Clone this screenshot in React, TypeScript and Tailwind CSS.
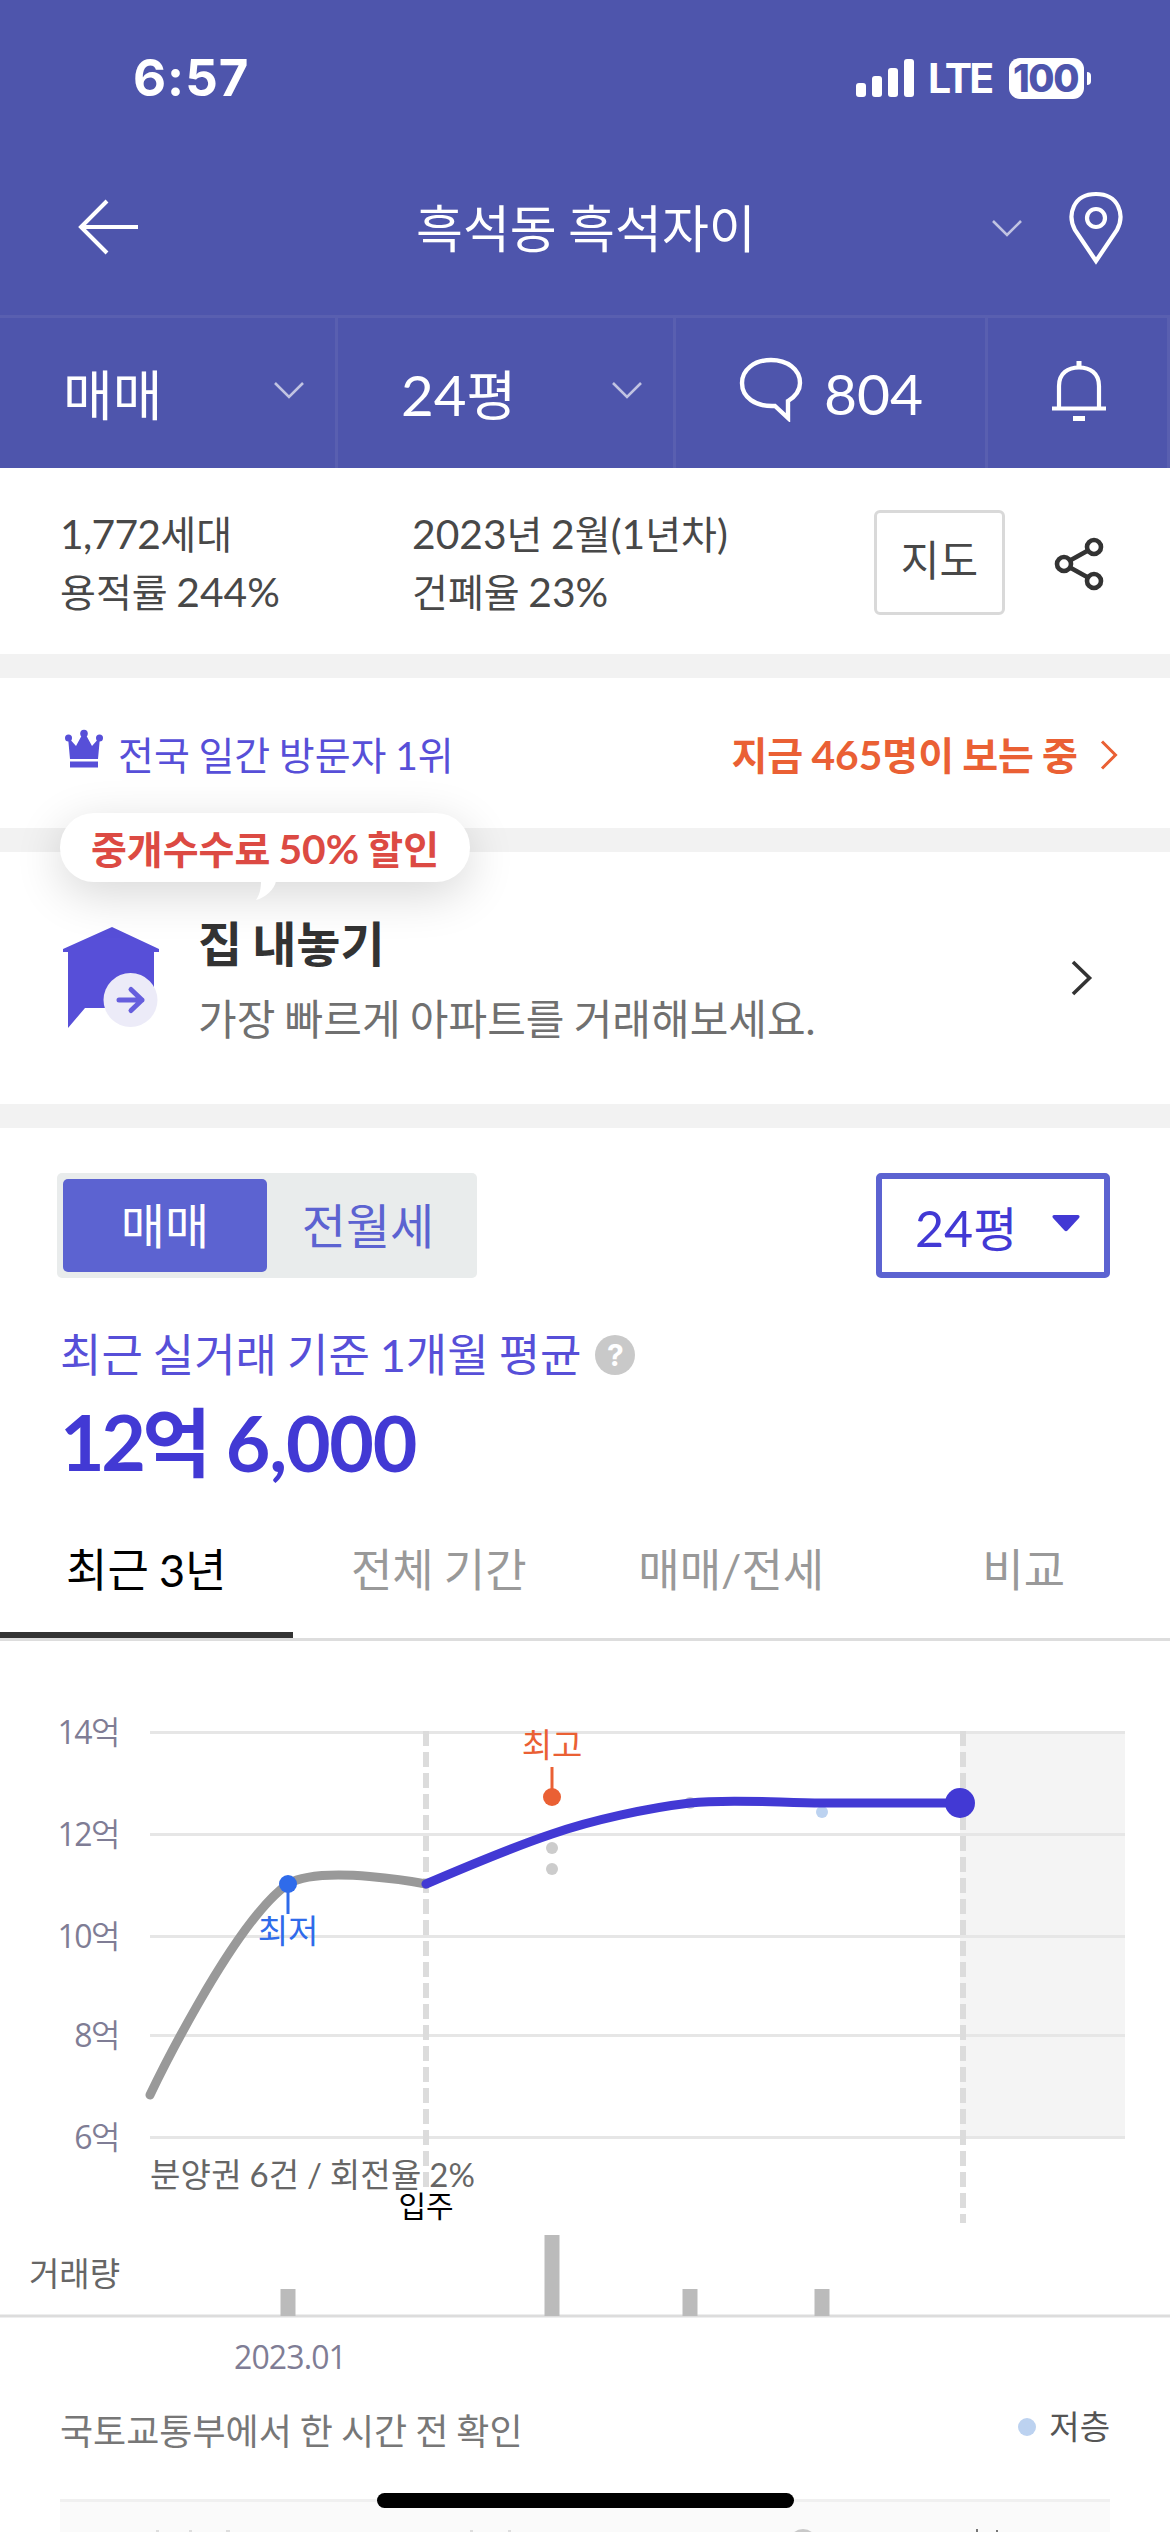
import React, { useState } from 'react';

const GRID = [
  { value: '14', y: 91.5 },
  { value: '12', y: 193.5 },
  { value: '10', y: 295.5 },
  { value: '8', y: 394.5 },
  { value: '6', y: 496.5 },
];

const VOLUMES = [
  { x: 288, height: 27 },
  { x: 552, height: 81 },
  { x: 690, height: 27 },
  { x: 822, height: 27 },
];

const TABS = ['최근 3년', '전체 기간', '매매/전세', '비교'];

// 숫자는 한글보다 살짝 크게
const Num = ({ children }: { children: string }) => (
  <span className="text-[1.045em] leading-none">{children}</span>
);

const ChevronDown = ({ className }: { className?: string }) => (
  <svg className={className} width="30" height="19" viewBox="0 0 30 19" fill="none" stroke="#fff" strokeOpacity="0.65" strokeWidth="2.6">
    <path d="M1 2 L15 16 L29 2" />
  </svg>
);

const StatusBar = () => (
  <div className="flex h-[156px] items-center justify-between pl-[133px] pr-[79px] font-['Inter',sans-serif] text-white">
    <span className="text-[51px] font-bold leading-[60px] tracking-[1px]">6:57</span>
    <div className="flex items-center">
      <svg width="58" height="38" viewBox="0 0 58 38" fill="#fff">
        <rect x="0" y="24" width="10" height="14" rx="3" />
        <rect x="16" y="17" width="10" height="21" rx="3" />
        <rect x="32" y="9" width="10" height="29" rx="3" />
        <rect x="48" y="0" width="10" height="38" rx="3" />
      </svg>
      <span className="ml-[14px] w-[64px] text-[41px] font-bold leading-[42px] tracking-[-2.8px]">LTE</span>
      <div className="ml-[17px] flex h-[41px] w-[75px] items-center justify-center rounded-[11px] bg-white pr-[2px]">
        <span className="text-[38px] font-extrabold leading-[41px] tracking-[-1.5px] text-[#4e55ac]">100</span>
      </div>
      <div className="ml-[3px] h-[13px] w-[4px] rounded-r-full bg-white" />
    </div>
  </div>
);

const Header = () => (
  <header className="h-[468px] bg-[#4e55ac] text-white">
    <StatusBar />
    <div className="flex h-[162px] items-center border-b-[3px] border-[#595fb0] pb-[15px] pl-[78px] pr-[47px]">
      <svg className="mb-[3px]" width="62" height="56" viewBox="0 0 62 56" fill="none" stroke="#fff" strokeWidth="4">
        <path d="M29 2 L3 28 L29 54 M3 28 H60" />
      </svg>
      <h1 className="ml-[276px] flex-1 pt-[1px] text-[51px] leading-[70px]">흑석동 흑석자이</h1>
      <ChevronDown />
      <svg className="ml-[47px]" width="54" height="74" viewBox="0 0 54 74" fill="none" stroke="#fff" strokeWidth="4.2">
        <path d="M27 70 L6 39 C-2 24 4 3 27 3 C50 3 56 24 48 39 Z" />
        <circle cx="27" cy="27" r="9" />
      </svg>
    </div>
    <div className="flex h-[150px] text-[54px]">
      <div className="flex w-[338px] items-center justify-between border-r-[3px] border-[#595fb0] pl-[63px] pr-[31px]">
        <span className="pt-[4px]">매매</span>
        <ChevronDown className="mb-[6px]" />
      </div>
      <div className="flex w-[338px] items-center justify-between border-r-[3px] border-[#595fb0] pl-[63px] pr-[31px]">
        <span className="pt-[4px]"><Num>24</Num>평</span>
        <ChevronDown className="mb-[6px]" />
      </div>
      <div className="flex w-[312px] items-center border-r-[3px] border-[#595fb0] pl-[62px]">
        <svg className="mb-[8px]" width="66" height="66" viewBox="0 0 66 66" fill="none" stroke="#fff" strokeWidth="4.4">
          <path d="M37 50 L50 62 V45 C58 40 62 34 62 27 C62 13 49 4 33 4 C16 4 4 14 4 27 C4 41 17 51 37 50 Z" />
        </svg>
        <span className="ml-[20px] pt-[2px] text-[57px]">804</span>
      </div>
      <div className="flex flex-1 items-center justify-center border-r-[3px] border-[#595fb0] pl-[2px]">
        <svg className="mb-[5px]" width="54" height="60" viewBox="0 0 54 60" fill="none" stroke="#fff" strokeWidth="4.2">
          <path d="M0 47.5 H54 M7 47 V25 C7 12 16 6.500 27 6.500 C38 6.500 47 12 47 25 V47" />
          <path d="M27 0 V7 M21 57.500 H33" strokeWidth="5" />
        </svg>
      </div>
    </div>
  </header>
);

const ComplexInfo = () => (
  <section className="flex h-[186px] items-center px-[60px] pt-[3px] text-[39px] leading-[58px] text-[#484848]">
    <div className="w-[352px]">
      <p><span className="text-[1.045em] leading-none tracking-[-0.7px]">1,772</span>세대</p>
      <p>용적률 <Num>244%</Num></p>
    </div>
    <div className="flex-1">
      <p><Num>2023</Num>년 <Num>2</Num>월<Num>(1</Num>년차<Num>)</Num></p>
      <p>건폐율 <Num>23%</Num></p>
    </div>
    <button className="h-[105px] w-[131px] rounded-[6px] border-[3px] border-[#d9d9d9] pb-[6px] text-[42px]">
      지도
    </button>
    <svg className="ml-[49px] mr-[6px] mt-[3px]" width="50" height="54" viewBox="0 0 50 54" fill="none" stroke="#333" strokeWidth="4.600">
      <circle cx="10" cy="27" r="7" />
      <circle cx="40" cy="10" r="7" />
      <circle cx="40" cy="44" r="7" />
      <path d="M16 23.500 L34 13.500 M16 30.500 L34 40.500" />
    </svg>
  </section>
);

const VisitorRow = () => (
  <section className="flex h-[150px] items-center pl-[63px] pr-[51px] pt-[4px] text-[39px]">
    <svg className="mb-[12px]" width="42" height="40" viewBox="0 0 42 40" fill="#574fd8">
      <path d="M5 8 L13 17 L19 6 H23 L29 17 L37 8 L35 30 H7 Z" />
      <circle cx="21" cy="4.500" r="3.800" />
      <circle cx="5.500" cy="9" r="3.500" />
      <circle cx="36.500" cy="9" r="3.500" />
      <rect x="7" y="32.500" width="28" height="6" />
    </svg>
    <span className="ml-[13px] text-[#574fd8]">전국 일간 방문자 1위</span>
    <span className="ml-auto font-bold text-[#ea6034]">지금 <Num>465</Num>명이 보는 중</span>
    <svg className="ml-[21px]" width="20" height="30" viewBox="0 0 20 30" fill="none" stroke="#ea6034" strokeWidth="3">
      <path d="M3 1.500 L16.500 15 L3 28.500" />
    </svg>
  </section>
);

const SellBanner = () => (
  <section className="relative flex h-[252px] items-start pl-[60px] pr-[77px]">
    {/* 할인 말풍선 */}
    <div className="absolute left-[60px] top-[-39px] flex h-[69px] w-[410px] items-center justify-center rounded-[34px] bg-white pt-[3px] text-[39px] font-bold text-[#dc4a43] shadow-[0_12px_48px_rgba(0,0,0,0.16)]">
      <span>중개수수료 <Num>50%</Num> 할인</span>
      <svg className="absolute left-[195px] top-[68px]" width="22" height="20" viewBox="0 0 22 20" fill="#fff">
        <path d="M6 0 H21 C20 8 10 17 1 19 C5 13 6 7 6 0 Z" />
      </svg>
    </div>
    <svg className="mt-[74px]" width="102" height="104" viewBox="0 0 102 104">
      <path d="M52 1 L99 23 V26 H94 V82 H25 L8 102 V26 H3 V23 Z" fill="#574fd8" />
      <circle cx="70.500" cy="74" r="27" fill="#ecebf8" />
      <path d="M59 74 H82 M71 63.500 L82 74 L71 84.500" fill="none" stroke="#665edd" strokeWidth="5" strokeLinecap="round" strokeLinejoin="round" />
    </svg>
    <div className="ml-[36px] mt-[56px] flex-1">
      <p className="text-[48px] font-bold leading-[72px] text-[#333]">집 내놓기</p>
      <p className="mt-[6px] text-[42px] leading-[66px] text-[#707070]">가장 빠르게 아파트를 거래해보세요.</p>
    </div>
    <svg className="mt-[108px]" width="22" height="36" viewBox="0 0 22 36" fill="none" stroke="#333" strokeWidth="3.600">
      <path d="M2 2 L18.500 18 L2 34" />
    </svg>
  </section>
);

const PriceSummary = () => {
  const [dealType, setDealType] = useState('매매');

  return (
    <section className="h-[372px] pt-[45px]">
      <div className="flex justify-between pl-[57px] pr-[60px] text-[48px]">
        <div className="flex h-[105px] w-[420px] rounded-[5px] bg-[#e9ecec] p-[6px] text-[#5c63d1]">
          {['매매', '전월세'].map((type) => (
            <button
              key={type}
              onClick={() => setDealType(type)}
              className={
                dealType === type
                  ? 'w-[204px] rounded-[5px] bg-[#5c63d1] text-white'
                  : 'flex-1 pr-[2px]'
              }
            >
              {type}
            </button>
          ))}
        </div>
        <button className="flex h-[105px] w-[234px] items-center justify-between rounded-[5px] border-[6px] border-[#5c63d1] pl-[33px] pr-[24px] text-[#4239d4]">
          <span className="pt-[7px]"><Num>24</Num>평</span>
          <svg className="mb-[5px]" width="28" height="17" viewBox="0 0 28 17" fill="#4239d4">
            <path d="M2 0 H26 Q28.500 0.500 27 3 L15.500 15.500 Q14 17 12.500 15.500 L1 3 Q-0.500 0.500 2 0 Z" />
          </svg>
        </button>
      </div>
      <div className="mt-[43px] flex items-center pl-[60px] text-[45px] leading-[68px] text-[#574fd8]">
        최근 실거래 기준 1개월 평균
        <span className="ml-[14px] flex h-[40px] w-[40px] items-center justify-center rounded-full bg-[#c9c9c9] font-['Inter',sans-serif] text-[30px] font-bold leading-none text-white">
          ?
        </span>
      </div>
      <p className="mt-[-2px] flex gap-[18px] pl-[60px] text-[75px] font-bold leading-[110px] text-[#4239d4]">
        <span className="tracking-[-3.5px]">
          <span className="text-[77px] leading-none">12</span>억
        </span>
        <span className="text-[77px] tracking-[-1.3px]">6,000</span>
      </p>
    </section>
  );
};

const PeriodTabs = () => {
  const [active, setActive] = useState(0);

  return (
    <nav className="grid h-[141px] grid-cols-4 border-b-[3px] border-[#ddd] text-[45px]">
      {TABS.map((tab, index) => (
        <button
          key={tab}
          onClick={() => setActive(index)}
          className={
            active === index
              ? 'border-b-[6px] border-[#333] pt-[9px] text-black'
              : 'border-b-[6px] border-transparent pt-[9px] text-[#999]'
          }
        >
          {tab}
        </button>
      ))}
    </nav>
  );
};

const PriceChart = () => (
  <svg className="block" width="1170" height="750" viewBox="0 0 1170 750" fontSize="33">
    <rect x="960" y="90" width="165" height="405" fill="#f4f4f4" />
    {GRID.map((line) => (
      <g key={line.value}>
        <line x1="150" x2="1125" y1={line.y} y2={line.y} stroke="#e6e6e6" strokeWidth="3" />
        <text x="119" y={line.y + 11} textAnchor="end" fontSize="32" fill="#7f7d95" className="font-['Open_Sans','Noto_Sans_CJK_KR',sans-serif] tracking-[-1.5px]">
          {line.value}
          <tspan className="font-[350]">억</tspan>
        </text>
      </g>
    ))}
    <g stroke="#dcdcdc" strokeWidth="6" strokeDasharray="15 6">
      <line x1="426" x2="426" y1="90" y2="546" />
      <line x1="963" x2="963" y1="90" y2="582" />
    </g>

    {/* 개별 거래 */}
    <circle cx="552" cy="207" r="6" fill="#ccc" />
    <circle cx="552" cy="228" r="6" fill="#ccc" />
    <circle cx="690" cy="162" r="6" fill="#ccc" />
    <circle cx="822" cy="171" r="6" fill="#bcd2f0" />

    {/* 입주 전 / 입주 후 시세 */}
    <g fill="none" strokeWidth="9" strokeLinecap="round">
      <path d="M150 454 C150 454 232 282 288 243 C322 223 426 243 426 243" stroke="#999" />
      <path d="M426 243 C426 243 510 207 552 193 C592 179 648 167 690 162 C729 157.500 782 162 822 162 C862 162 960 162 960 162" stroke="#4239d4" />
    </g>
    <circle cx="960" cy="162" r="15" fill="#4239d4" />

    <line x1="552" x2="552" y1="126" y2="156" stroke="#ea6034" strokeWidth="3" />
    <circle cx="552" cy="156" r="9" fill="#ea6034" />
    <text x="552" y="116" textAnchor="middle" fill="#ea6034">최고</text>
    <line x1="288" x2="288" y1="243" y2="273" stroke="#2f6bea" strokeWidth="3" />
    <circle cx="288" cy="243" r="9" fill="#2f6bea" />
    <text x="288" y="302" textAnchor="middle" fill="#2f6bea">최저</text>

    <text x="150" y="546" fill="#666" className="tracking-[0.25px]">분양권 6건 / 회전율 2%</text>
    <text x="426" y="576" textAnchor="middle" fontSize="30" fill="#000">입주</text>

    {/* 거래량 */}
    <text x="29" y="645" fill="#666">거래량</text>
    <line x1="0" x2="1170" y1="675" y2="675" stroke="#ddd" strokeWidth="3" />
    {VOLUMES.map((bar) => (
      <rect key={bar.x} x={bar.x - 7.5} y={675 - bar.height} width="15" height={bar.height} fill="#bbb" />
    ))}
    <text x="290" y="728" textAnchor="middle" fontSize="32" fill="#7f7d95" className="font-['Open_Sans',sans-serif] tracking-[-0.9px]">
      2023.01
    </text>
  </svg>
);

const App: React.FC = () => {
  return (
    <div className="relative h-[2532px] w-[1170px] overflow-hidden bg-white font-['Lato','Noto_Sans_CJK_KR',sans-serif] [&_*]:[word-spacing:-0.034em]">
      <Header />
      <main>
        <ComplexInfo />
        <div className="h-[24px] bg-[#f2f2f2]" />
        <VisitorRow />
        <div className="h-[24px] bg-[#f2f2f2]" />
        <SellBanner />
        <div className="h-[24px] bg-[#f2f2f2]" />
        <PriceSummary />
        <PeriodTabs />
        <PriceChart />
        <div className="flex h-[108px] items-center justify-between px-[60px] pb-[28px]">
          <span className="text-[36px] text-[#777]">국토교통부에서 한 시간 전 확인</span>
          <span className="mb-[8px] flex items-center text-[33px] text-[#555]">
            <span className="mr-[13px] h-[18px] w-[18px] rounded-full bg-[#bcd2f0]" />
            저층
          </span>
        </div>
        {/* 실거래 표 */}
        <div className="mx-[60px] h-[60px] border-t-[3px] border-[#f0f0f0] bg-[#fafafa]">
          <svg width="1050" height="30" viewBox="0 0 1050 30">
            <path d="M96 29 h3 M129 29 h3 M166 29 h4 M410 29 h3 M448 29 h3" stroke="#ddd" strokeWidth="2" />
            <circle cx="743" cy="41" r="14" fill="#c9c9c9" />
            <path d="M917 27 v3 M937 28 v2" stroke="#777" strokeWidth="2" />
          </svg>
        </div>
      </main>
      {/* 홈 인디케이터 */}
      <div className="absolute left-[377px] top-[2493px] h-[15px] w-[417px] rounded-full bg-black" />
    </div>
  );
};

export default App;
